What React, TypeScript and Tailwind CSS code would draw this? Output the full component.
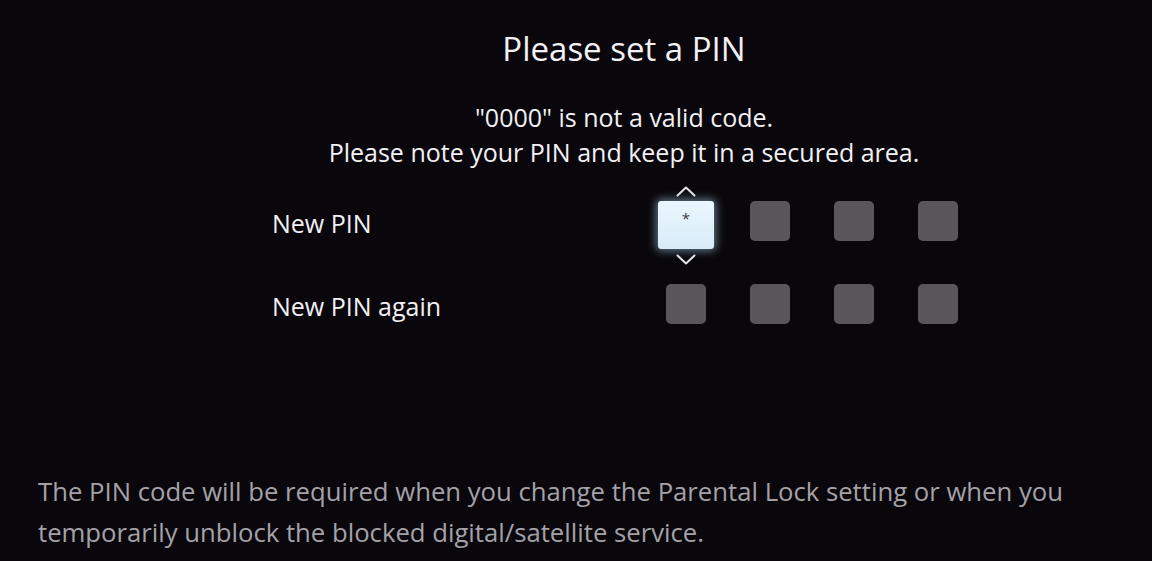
const font = { fontFamily: '"Open Sans", "Noto Sans", sans-serif' };

function Caret({ down }: { down?: boolean }) {
  return (
    <svg width="20" height="11" viewBox="0 0 20 11" fill="none" className="block">
      <polyline
        points={down ? "1.5,1.5 10,9.5 18.5,1.5" : "1.5,9.5 10,1.5 18.5,9.5"}
        stroke="#e6e6ea"
        strokeWidth="2"
        strokeLinecap="round"
        strokeLinejoin="round"
      />
    </svg>
  );
}

function PinBox({ focused, value }: { focused?: boolean; value?: string }) {
  if (!focused) {
    return <div className="w-10 h-10 shrink-0 rounded-[5px] bg-[#5a5558]" />;
  }
  return (
    <div className="relative w-10 h-10 shrink-0">
      <div className="absolute left-[10px] -top-[15px]">
        <Caret />
      </div>
      <div className="absolute -left-[8px] -right-[8px] top-0 -bottom-[8px] rounded-[3px] bg-gradient-to-b from-[#eaf6fd] to-[#d8ecf8] shadow-[0_0_8px_2px_rgba(170,215,245,0.55)] flex items-start justify-center pt-[10px]">
        <span className="text-[15px] leading-none text-[#3a3d44]">{value}</span>
      </div>
      <div className="absolute left-[10px] top-[53px]">
        <Caret down />
      </div>
    </div>
  );
}

function PinRow({ label, focusFirst }: { label: string; focusFirst?: boolean }) {
  return (
    <div className="flex items-center">
      <div className="w-[394px] mt-[4px] text-[25px] font-medium text-[#f1f0f4] leading-none">{label}</div>
      <div className="flex gap-[44px]">
        <PinBox focused={focusFirst} value="*" />
        <PinBox />
        <PinBox />
        <PinBox />
      </div>
    </div>
  );
}

export default function App() {
  return (
    <div className="w-[1152px] h-[561px] bg-[#09070b] flex flex-col overflow-hidden" style={font}>
      <div className="pl-[96px] text-center text-[#f2f1f5]">
        <h1 className="pt-[26px] text-[33px] leading-[45px]">Please set a PIN</h1>
        <div className="mt-[29px] text-[25px] leading-[35px] font-medium">
          <p>"0000" is not a valid code.</p>
          <p>Please note your PIN and keep it in a secured area.</p>
        </div>
      </div>
      <div className="mt-[31px] pl-[272px] flex flex-col gap-[43px]">
        <PinRow label="New PIN" focusFirst />
        <PinRow label="New PIN again" />
      </div>
      <p className="mt-auto mb-[8px] px-[38px] text-[25.7px] leading-[41px] text-[#a4a2a7]">
        The PIN code will be required when you change the Parental Lock setting or when you
        <br />
        temporarily unblock the blocked digital/satellite service.
      </p>
    </div>
  );
}
